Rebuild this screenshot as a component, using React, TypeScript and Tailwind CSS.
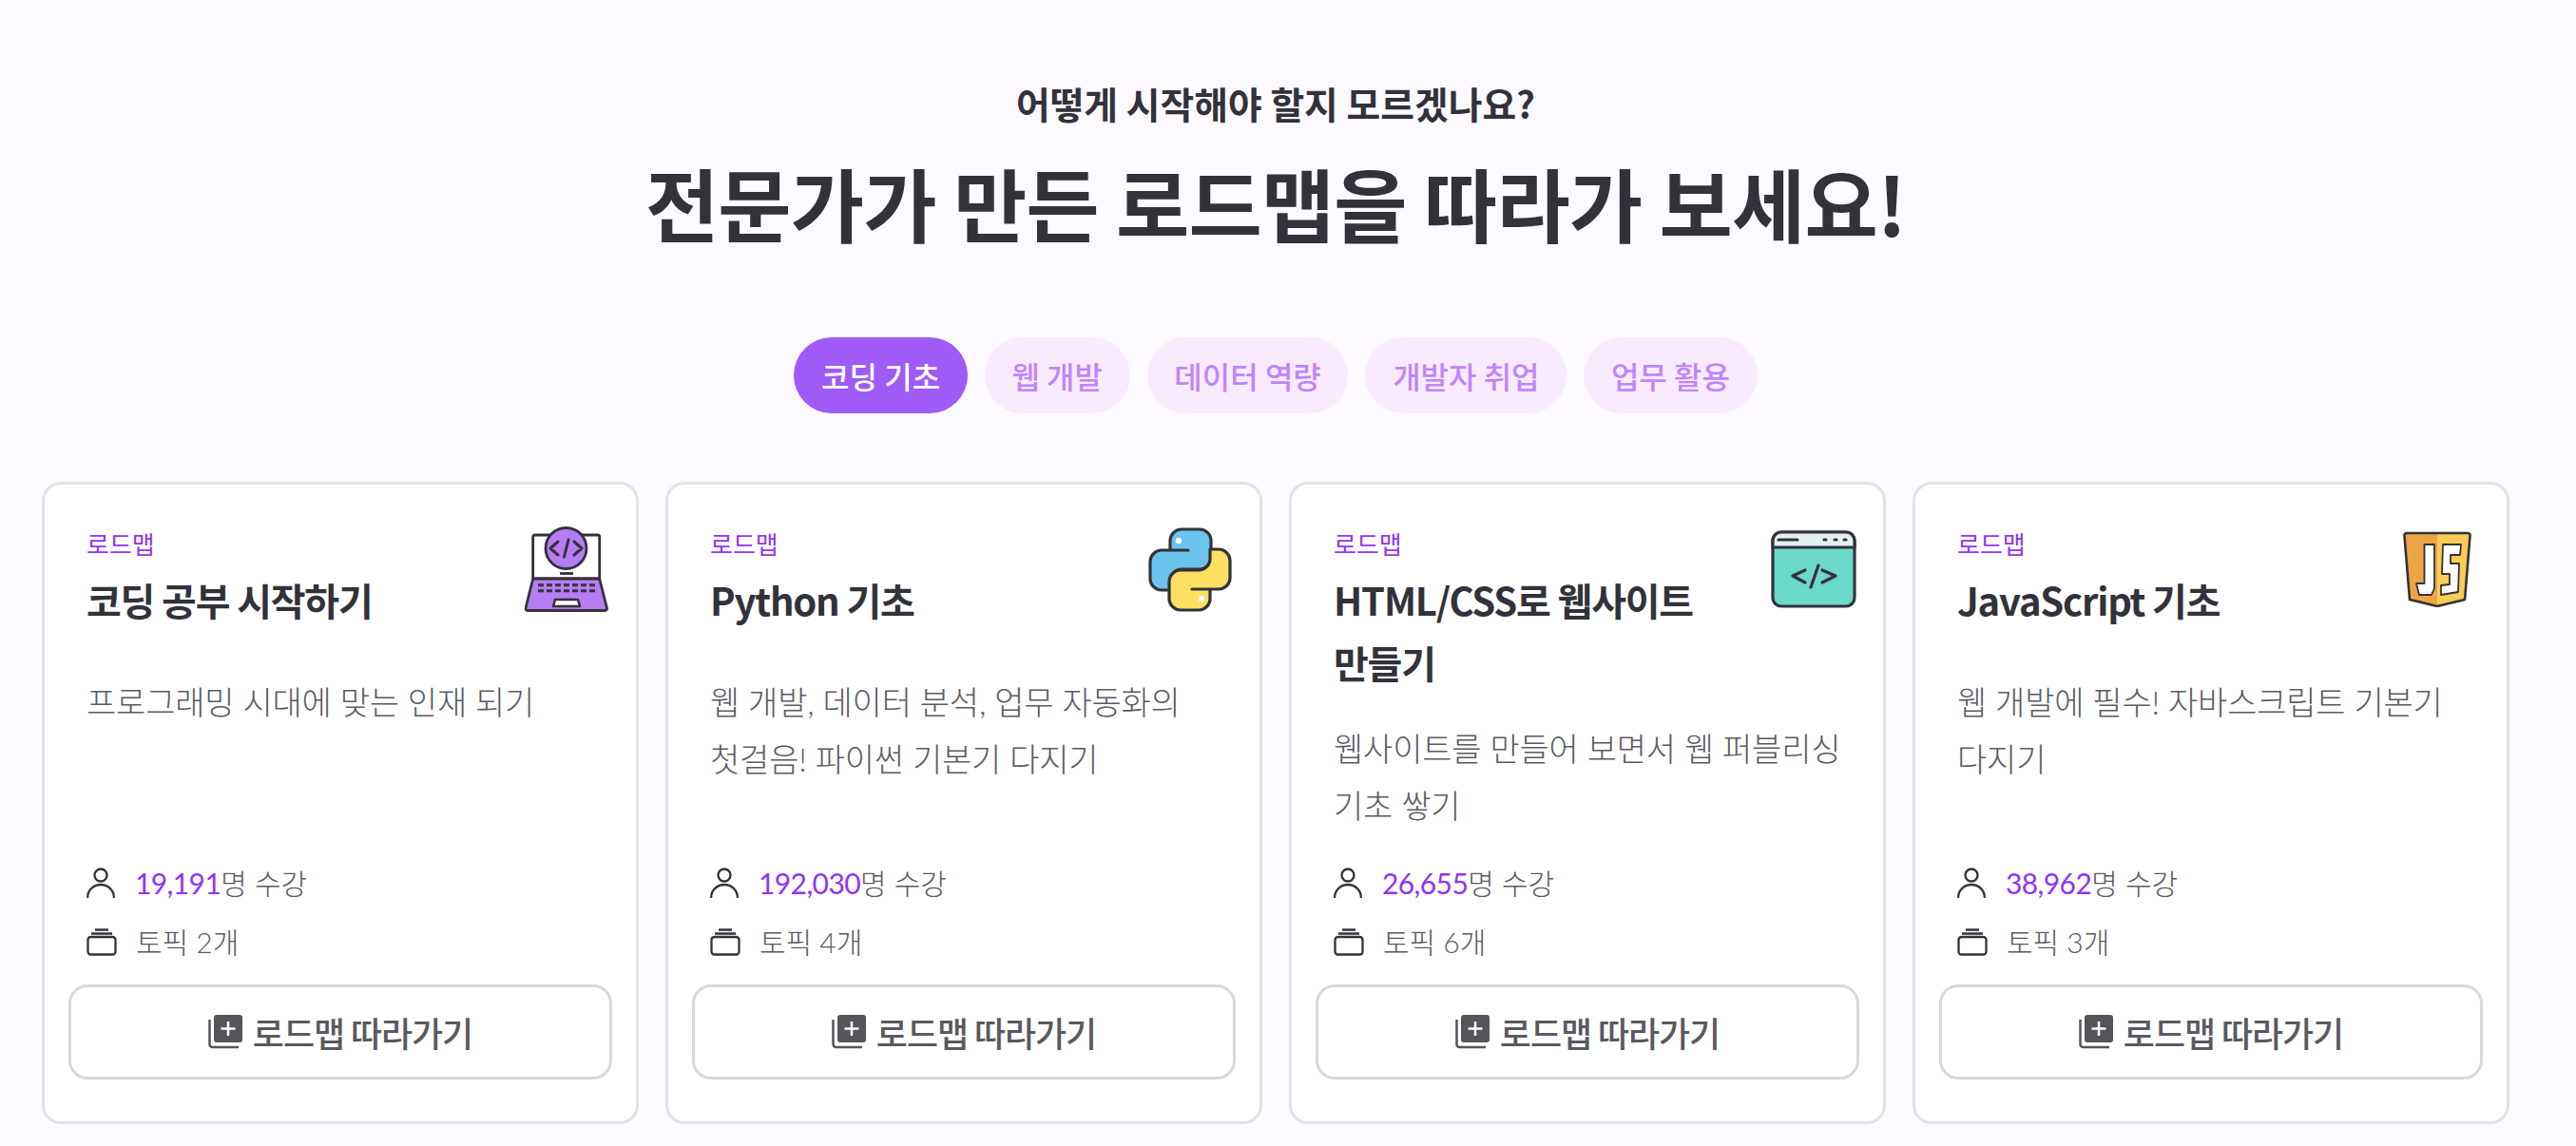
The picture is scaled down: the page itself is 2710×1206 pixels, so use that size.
import React from "react";

const tabs = ["코딩 기초", "웹 개발", "데이터 역량", "개발자 취업", "업무 활용"];
const noto = { fontFamily: "'Noto Sans CJK KR', sans-serif" };

function LaptopIcon() {
  return (
    <svg viewBox="0 0 88 90" className="w-[88px] h-[90px]" fill="none" stroke="#33323a" strokeWidth="2.800" strokeLinejoin="round">
      <path d="M8.700 55 V11 a2 2 0 0 1 2-2 H76.700 a2 2 0 0 1 2 2 V55 Z" fill="#fff" />
      <path d="M8.700 55 H78.700 L86.500 86 a2 2 0 0 1-2 2.500 H3 a2 2 0 0 1-2-2.500 Z" fill="#b67cf2" />
      <circle cx="43.500" cy="23" r="21.500" fill="#b67cf2" />
      <path d="M35 16 L27 23 L35 30 M52 16 L60 23 L52 30 M46 14 L41.500 32" strokeWidth="3" strokeLinecap="round" />
      <path d="M37 49.500 H51" />
      <path d="M14 61.700 H74 M14 67.700 H74" strokeWidth="3" strokeDasharray="6 3" />
      <path d="M30 84 L32 77 H56 L58 84 Z" fill="#fff" strokeWidth="2.600" />
    </svg>
  );
}

function PythonIcon() {
  const snake = "M42 24 H14 a12 12 0 0 0-12 12 V54 a12 12 0 0 0 12 12 H23 V56 a12 12 0 0 1 12-12 H54 a12 12 0 0 0 12-12 V14 a12 12 0 0 0-12-12 H35 a12 12 0 0 0-12 12 V24";
  return (
    <svg viewBox="0 0 88 89" className="w-[88px] h-[89px]" fill="none" stroke="#33323a" strokeWidth="3.200" strokeLinejoin="round" strokeLinecap="round">
      <path d={snake} fill="#6cc4ed" />
      <path d={snake} fill="#fbe062" transform="rotate(180 44 44.500)" />
      <circle cx="32" cy="14" r="3.200" fill="#fff" stroke="none" />
      <circle cx="56" cy="75" r="3.200" fill="#fff" stroke="none" />
    </svg>
  );
}

function BrowserIcon() {
  return (
    <svg viewBox="0 0 90 82" className="w-[90px] h-[82px]" fill="none" stroke="#33323a" strokeWidth="3.200" strokeLinecap="round" strokeLinejoin="round">
      <rect x="2" y="2" width="86" height="78" rx="9" fill="#6ad9c7" />
      <path d="M2 18 V11 a9 9 0 0 1 9-9 H79 a9 9 0 0 1 9 9 V18 Z" fill="#e4eff4" />
      <path d="M8 10 H28" />
      <path d="M56 10 H58 M67 10 H69 M77 10 H79" />
      <path d="M36 42 L23 48 L36 55 M54 42 L68 48 L54 55 M50 37 L42 60" />
    </svg>
  );
}

function JsIcon() {
  return (
    <svg viewBox="0 0 72 80" className="w-[72px] h-[80px]" fill="none" stroke="#33323a" strokeWidth="2.600" strokeLinejoin="round">
      <path d="M36 2 H4 a2.500 2.500 0 0 0-2.500 3 L7 72 L36 79 Z" fill="#eca544" stroke="none" />
      <path d="M36 2 H68 a2.500 2.500 0 0 1 2.500 3 L65 72 L36 79 Z" fill="#fbcb55" stroke="none" />
      <path d="M4 2 H68 a2.500 2.500 0 0 1 2.500 3 L65 72 L36 79 L7 72 L1.500 5 a2.500 2.500 0 0 1 2.500-3 Z" />
      <path d="M22.500 14 H33 V60 L30 67 H17 L14 55 H22.500 Z" fill="#fff" strokeWidth="1.800" />
      <path d="M42 14 H61 L60 25 H50 V34 H59 L58 64 L40 67 V57 L49 56 V45 H41 Z" fill="#fff" strokeWidth="1.800" />
    </svg>
  );
}

function Card({
  title,
  desc,
  count,
  topics,
  icon,
}: {
  title: string;
  desc: string;
  count: string;
  topics: number;
  icon: React.ReactNode;
}) {
  return (
    <div className="bg-white rounded-[20px] border-[3px] border-[#e1e1e8] pt-[44px] px-[25px] pb-[44px] h-[676px] flex flex-col">
      <div className="px-[19px] flex flex-col flex-1">
        <div className="flex justify-between min-h-[127px] mb-[28px]">
          <div className="w-[420px]">
            <div className="text-[26px] leading-[36px] text-[#9333f5]" style={noto}>로드맵</div>
            <div className="text-[40px] leading-[66px] font-semibold text-[#33323a] mt-[8px] tracking-[-0.03em]" style={noto}>{title}</div>
          </div>
          <div className="w-[96px] h-[96px] -mr-[19px] -mt-[3px] flex items-center justify-center shrink-0">{icon}</div>
        </div>
        <div className="text-[34px] leading-[60px] text-[#5b5a62] font-light break-keep tracking-[-0.006em] -mr-[8px]">{desc}</div>
        <div className="mt-auto pb-[14px]">
          <div className="flex items-center text-[30px] leading-[62px] text-[#5b5a62] font-light">
            <svg viewBox="0 0 30 32" className="w-[30px] h-[32px] mr-[21px]" fill="none" stroke="#33323a" strokeWidth="2.300">
              <circle cx="15" cy="8" r="6.500" />
              <path d="M1.200 31 a13.800 13 0 0 1 27.600 0" strokeLinecap="round" />
            </svg>
            <span className="text-[#9333f5] font-normal tracking-[-0.02em]">{count}</span>명 수강
          </div>
          <div className="flex items-center text-[30px] leading-[62px] text-[#5b5a62] font-light">
            <svg viewBox="0 0 32 29" className="w-[32px] h-[29px] mr-[20px]" fill="none" stroke="#33323a" strokeWidth="2.300">
              <rect x="1.500" y="9" width="29" height="18.500" rx="3" />
              <path d="M5 5.500 H27 M9 1.500 H23" />
            </svg>
            토픽 {topics}개
          </div>
        </div>
      </div>
      <button className="h-[100px] rounded-[20px] border-[3px] border-[#d8d8dc] bg-white flex items-center justify-center gap-[11px] text-[36px] tracking-[-0.03em] font-medium text-[#5a5960]" style={noto}>
        <svg viewBox="0 0 36 36" className="w-[36px] h-[36px]" fill="none">
          <rect x="6" y="0" width="30" height="29" rx="3" fill="#55545b" />
          <path d="M21 7 V22 M13.500 14.500 H28.500" stroke="#fff" strokeWidth="2.500" />
          <path d="M1.500 5 V31 a3 3 0 0 0 3 3 H32" stroke="#55545b" strokeWidth="2.500" />
        </svg>
        로드맵 따라가기
      </button>
    </div>
  );
}

export default function App() {
  return (
    <div
      className="w-[2710px] h-[1206px] overflow-hidden bg-[#fcfaff] pt-[79px] pr-[26px] flex flex-col items-center"
      style={{ fontFamily: "Lato, 'Noto Sans CJK KR', sans-serif" }}
    >
      <div className="text-[38.800px] leading-[58px] font-semibold text-[#33323a]" style={noto}>어떻게 시작해야 할지 모르겠나요?</div>
      <div className="text-[84px] leading-[120px] font-bold text-[#33323a] mt-[16px] tracking-[-0.01em]" style={noto}>전문가가 만든 로드맵을 따라가 보세요!</div>
      <div className="flex gap-[18px] mt-[82px]">
        {tabs.map((t, i) => (
          <div
            key={t}
            className={
              i === 0
                ? "h-[80px] px-[28.700px] rounded-full flex items-center text-[32px] font-medium bg-[#9f5af7] text-white"
                : "h-[80px] px-[28.700px] rounded-full flex items-center text-[32px] font-medium bg-[#f7ebfd] text-[#c084fc]"
            }
            style={noto}
          >
            {t}
          </div>
        ))}
      </div>
      <div className="w-[2596px] grid grid-cols-4 gap-[28px] mt-[72px]">
        <Card title="코딩 공부 시작하기" desc="프로그래밍 시대에 맞는 인재 되기" count="19,191" topics={2} icon={<LaptopIcon />} />
        <Card title="Python 기초" desc="웹 개발, 데이터 분석, 업무 자동화의 첫걸음! 파이썬 기본기 다지기" count="192,030" topics={4} icon={<PythonIcon />} />
        <Card title="HTML/CSS로 웹사이트 만들기" desc="웹사이트를 만들어 보면서 웹 퍼블리싱 기초 쌓기" count="26,655" topics={6} icon={<BrowserIcon />} />
        <Card title="JavaScript 기초" desc="웹 개발에 필수! 자바스크립트 기본기 다지기" count="38,962" topics={3} icon={<JsIcon />} />
      </div>
    </div>
  );
}
